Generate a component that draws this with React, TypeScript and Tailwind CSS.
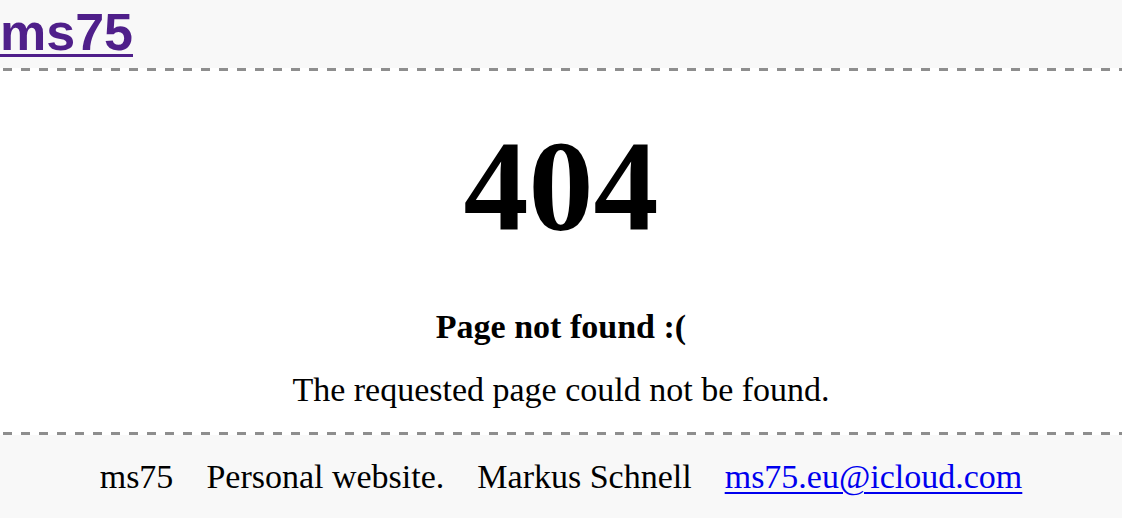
import React from "react";

const Dash = () => (
  <div className="h-[3px] w-full bg-[repeating-linear-gradient(90deg,transparent_0_3px,#8e8e8e_3px_12px,transparent_12px_18px)]" />
);

export default function App() {
  return (
    <div className="flex h-[518px] w-[1122px] flex-col overflow-hidden bg-white font-['Liberation_Serif',serif] text-black">
      <header className="flex h-[68px] items-start bg-[#f8f8f8]">
        <a
          href="#"
          className="font-['Liberation_Sans',Arial,sans-serif] text-[52px] font-bold leading-[64px] text-[#4f1f8a] underline decoration-[3px] underline-offset-[4px]"
        >
          ms75
        </a>
      </header>
      <Dash />
      <main className="flex flex-1 flex-col items-center">
        <h1 className="mt-[50px] text-[130px] font-bold leading-[130px]">404</h1>
        <h2 className="mt-[57px] text-[34px] font-bold leading-[38px]">Page not found :(</h2>
        <p className="mt-[25px] text-[34px] leading-[38px]">The requested page could not be found.</p>
      </main>
      <Dash />
      <footer className="flex h-[83px] items-center justify-center gap-[33px] bg-[#f8f8f8] text-[34px] leading-[38px]">
        <span>ms75</span>
        <span>Personal website.</span>
        <span>Markus Schnell</span>
        <a href="#" className="text-[#0000ee] underline decoration-[2px] underline-offset-[4px]">
          ms75.eu@icloud.com
        </a>
      </footer>
    </div>
  );
}
